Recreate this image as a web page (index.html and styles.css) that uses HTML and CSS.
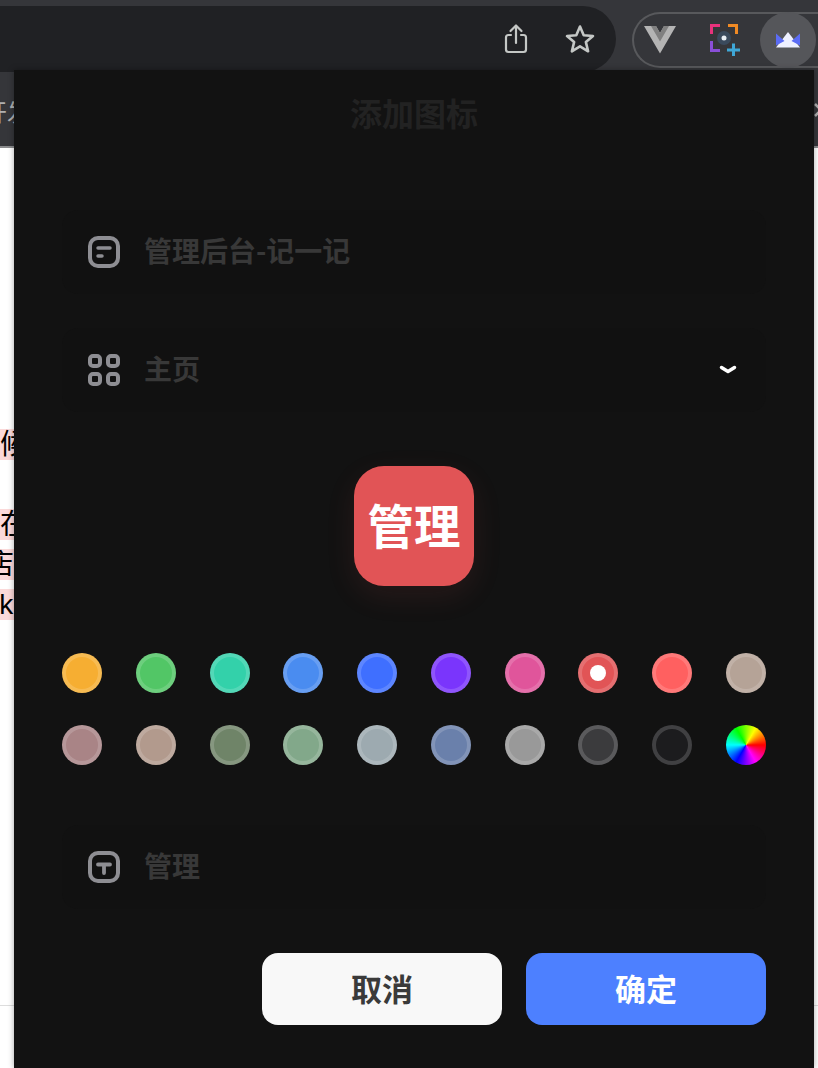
FILE: index.html
```html
<!DOCTYPE html>
<html>
<head>
    <title>添加图标</title>
    <link rel="stylesheet" href="styles.css">
</head>
<body>
    <div class="toolbar">
        <div class="address-bar">
            <svg class="tool-icon" width="28" height="32" viewBox="0 0 28 32" fill="none" stroke="#c4c7c5" stroke-width="2.2" stroke-linecap="round" stroke-linejoin="round">
                <path d="M9 12H6.500A2.500 2.500 0 0 0 4 14.500V26.500A2.500 2.500 0 0 0 6.500 29H21.500A2.500 2.500 0 0 0 24 26.500V14.500A2.500 2.500 0 0 0 21.500 12H19"/>
                <path d="M14 20V3M8.500 8L14 2.500L19.500 8"/>
            </svg>
            <svg class="tool-icon" width="32" height="32" viewBox="0 0 32 32" fill="none" stroke="#c4c7c5" stroke-width="2.600" stroke-linejoin="round">
                <path d="M16 3.500L19.700 12.300L29 13L21.900 19.100L24.100 28.300L16 23.400L7.900 28.300L10.100 19.100L3 13L12.300 12.300Z"/>
            </svg>
        </div>
        <div class="extensions">
            <svg class="ext-icon" width="32" height="28" viewBox="0 0 32 28">
                <path d="M0 0H12L16 7L20 0H32L16 27.500Z" fill="#b4b4b4"/>
                <path d="M7 0H12L16 7L20 0H25L16 15.500Z" fill="#808080"/>
            </svg>
            <svg class="ext-icon" width="32" height="32" viewBox="0 0 32 32" fill="none" stroke-width="3">
                <path d="M1.500 10V1.500H10" stroke="#e8327c"/>
                <path d="M18 1.500H26.500V10" stroke="#f08a24"/>
                <path d="M1.500 17V26.500H10" stroke="#8a4fd8"/>
                <path d="M17 26H30M23.500 19.500V32" stroke="#3fa7d6"/>
                <circle cx="14" cy="14" r="7" fill="#3a4a5c" stroke="none"/>
                <circle cx="14" cy="14" r="2.500" fill="#e8eef4" stroke="none"/>
            </svg>
            <div class="ext-active">
                <svg width="24" height="16" viewBox="0 0 24 16">
                    <path d="M12 0L24 15.500H0Z" fill="#eef0ff"/>
                    <path d="M0 1.500L8.500 9L0 13.500ZM24 1.500L15.500 9L24 13.500Z" fill="#5b6cf5"/>
                </svg>
            </div>
        </div>
    </div>

    <div class="tabbar">
        <span class="tab-text">开发</span>
        <svg class="tab-close" width="14" height="14" viewBox="0 0 14 14" fill="none" stroke="#b0b0b0" stroke-width="2.500">
            <path d="M1 1L13 13M13 1L1 13"/>
        </svg>
    </div>

    <div class="page">
        <p class="line"><span class="mark">候</span></p>
        <p class="line"></p>
        <p class="line"><span class="mark">在</span></p>
        <p class="line"><span class="mark shift-far">店</span></p>
        <p class="line"><span class="mark shift">rk</span></p>
        <div class="page-rule"></div>
    </div>

    <div class="panel">
        <h1 class="title">添加图标</h1>

        <div class="field first">
            <svg class="field-icon" width="32" height="32" viewBox="0 0 32 32" fill="none" stroke="#8e8e93" stroke-width="4" stroke-linecap="round">
                <rect x="2" y="2" width="28" height="28" rx="8"/>
                <path d="M10 12H22" stroke-width="3.500"/>
                <path d="M10 20H14" stroke-width="3.500"/>
            </svg>
            <span class="field-text">管理后台-记一记</span>
        </div>

        <div class="field second">
            <svg class="field-icon" width="32" height="32" viewBox="0 0 32 32" fill="none" stroke="#8e8e93" stroke-width="4">
                <rect x="2" y="2" width="10" height="10" rx="3"/>
                <rect x="20" y="2" width="10" height="10" rx="3"/>
                <rect x="2" y="20" width="10" height="10" rx="3"/>
                <rect x="20" y="20" width="10" height="10" rx="3"/>
            </svg>
            <span class="field-text">主页</span>
            <svg class="chevron" width="18" height="10" viewBox="0 0 18 10" fill="none" stroke="#ffffff" stroke-width="3.500" stroke-linecap="round" stroke-linejoin="round">
                <path d="M2.500 2.500L9 6.500L15.500 2.500"/>
            </svg>
        </div>

        <div class="preview">管理</div>

        <div class="swatches">
            <div class="swatch" style="background-color: #f6ae32"></div>
            <div class="swatch" style="background-color: #52c666"></div>
            <div class="swatch" style="background-color: #33d1aa"></div>
            <div class="swatch" style="background-color: #4a8cf0"></div>
            <div class="swatch" style="background-color: #3f6fff"></div>
            <div class="swatch" style="background-color: #7a35fc"></div>
            <div class="swatch" style="background-color: #e0559b"></div>
            <div class="swatch selected" style="background-color: #e15456"></div>
            <div class="swatch" style="background-color: #ff6060"></div>
            <div class="swatch" style="background-color: #b5a397"></div>
            <div class="swatch" style="background-color: #a98486"></div>
            <div class="swatch" style="background-color: #b29a8d"></div>
            <div class="swatch" style="background-color: #6f8468"></div>
            <div class="swatch" style="background-color: #82a88a"></div>
            <div class="swatch" style="background-color: #9daab0"></div>
            <div class="swatch" style="background-color: #6a80ab"></div>
            <div class="swatch" style="background-color: #999999"></div>
            <div class="swatch" style="background-color: #3b3b3d"></div>
            <div class="swatch" style="background-color: #1c1c1e"></div>
            <div class="swatch wheel"></div>
        </div>

        <div class="field third">
            <svg class="field-icon" width="32" height="32" viewBox="0 0 32 32" fill="none" stroke="#8e8e93" stroke-width="4" stroke-linecap="round">
                <rect x="2" y="2" width="28" height="28" rx="8"/>
                <path d="M10 13.500H22M16 13.500V22" stroke-width="3.800"/>
            </svg>
            <span class="field-text">管理</span>
        </div>

        <div class="buttons">
            <button class="btn cancel">取消</button>
            <button class="btn confirm">确定</button>
        </div>
    </div>
</body>
</html>
```

FILE: styles.css
```css
* {
    box-sizing: border-box;
}

html, body {
    height: 100%;
}

body {
    margin: 0;
    height: 1068px;
    overflow: hidden;
    position: relative;
    background-color: #ffffff;
    font-family: "Noto Sans CJK SC", "Noto Sans", sans-serif;
}

.toolbar {
    height: 74px;
    padding-top: 6px;
    background-color: #35363a;
    display: flex;
}

.address-bar {
    width: 616px;
    height: 66px;
    padding-right: 20px;
    background-color: #202124;
    border-radius: 0 33px 33px 0;
    display: flex;
    flex-shrink: 0;
    align-items: center;
    justify-content: flex-end;
    gap: 34px;
}

.tool-icon {
    flex-shrink: 0;
}

.extensions {
    width: 202px;
    height: 56px;
    margin: 6px 0 0 16px;
    padding-left: 10px;
    border: 2px solid #58595c;
    border-right: none;
    border-radius: 28px 0 0 28px;
    display: flex;
    flex-shrink: 0;
    align-items: center;
    gap: 34px;
}

.ext-icon {
    flex-shrink: 0;
}

.ext-active {
    width: 56px;
    height: 56px;
    margin-left: -16px;
    border-radius: 50%;
    background-color: #55565a;
    display: flex;
    align-items: center;
    justify-content: center;
    flex-shrink: 0;
}

.tabbar {
    height: 74px;
    background-color: #35363a;
    border-bottom: 2px solid #8a8b8d;
    display: flex;
    align-items: center;
    justify-content: space-between;
    overflow: hidden;
    font-size: 24px;
    color: #b0b0b0;
}

.tab-text {
    margin-left: -17px;
}

.tab-close {
    margin-right: -10px;
    flex-shrink: 0;
}

.page {
    height: 920px;
    padding-top: 277px;
    color: #000000;
    font-family: "Liberation Sans", "Noto Sans CJK SC", sans-serif;
    font-size: 28px;
    line-height: 40px;
    position: relative;
}

.line {
    margin: 0;
    height: 40px;
}

.mark {
    background-color: #fbd9d9;
    padding-right: 20px;
}

.shift {
    margin-left: -10px;
}

.shift-far {
    margin-left: -14px;
}

.page-rule {
    position: absolute;
    left: 0;
    right: 0;
    top: 857px;
    height: 1px;
    background-color: #dddddd;
}

.panel {
    position: absolute;
    left: 14px;
    top: 70px;
    width: 800px;
    height: 998px;
    padding: 0 48px;
    background-color: #121212;
    box-shadow: 0 0 6px rgba(0, 0, 0, 0.35);
}

.title {
    margin: 0;
    height: 88px;
    line-height: 84px;
    text-align: center;
    font-size: 32px;
    font-weight: 700;
    color: #222222;
}

.field {
    height: 84px;
    padding: 0 26px;
    background-color: #111111;
    border-radius: 16px;
    display: flex;
    align-items: center;
}

.first {
    margin-top: 52px;
}

.second {
    margin-top: 34px;
}

.third {
    margin-top: 60px;
}

.field-icon {
    flex-shrink: 0;
}

.field-text {
    margin-left: 24px;
    padding-bottom: 5px;
    font-size: 28px;
    font-weight: 700;
    color: #383838;
}

.chevron {
    margin-left: auto;
    margin-right: 3px;
}

.preview {
    width: 120px;
    height: 120px;
    margin: 54px auto 0;
    padding-bottom: 6px;
    background-color: #e15456;
    border-radius: 30px;
    box-shadow: 0 10px 30px rgba(225, 84, 86, 0.1);
    color: #ffffff;
    font-size: 46.5px;
    font-weight: 700;
    display: flex;
    align-items: center;
    justify-content: center;
}

.swatches {
    margin-top: 67px;
    display: grid;
    grid-template-columns: repeat(10, 40px);
    justify-content: space-between;
    row-gap: 32px;
}

.swatch {
    width: 40px;
    height: 40px;
    border: 4px solid rgba(255, 255, 255, 0.16);
    border-radius: 50%;
    display: flex;
    align-items: center;
    justify-content: center;
}

.selected::after {
    content: "";
    width: 16px;
    height: 16px;
    border-radius: 50%;
    background-color: #ffffff;
}

.wheel {
    border: none;
    background: conic-gradient(from 90deg, #ff0000, #ff00ff, #0000ff, #00ffff, #00ff00, #ffff00, #ff0000);
}

.buttons {
    margin-top: 44px;
    display: flex;
    justify-content: flex-end;
    gap: 24px;
}

.btn {
    width: 240px;
    height: 72px;
    padding: 0 0 4px;
    border: none;
    border-radius: 16px;
    font-family: inherit;
    font-size: 31px;
    font-weight: 700;
}

.cancel {
    background-color: #f8f8f8;
    color: #3a3a3a;
}

.confirm {
    background-color: #4d80ff;
    color: #ffffff;
}
```
